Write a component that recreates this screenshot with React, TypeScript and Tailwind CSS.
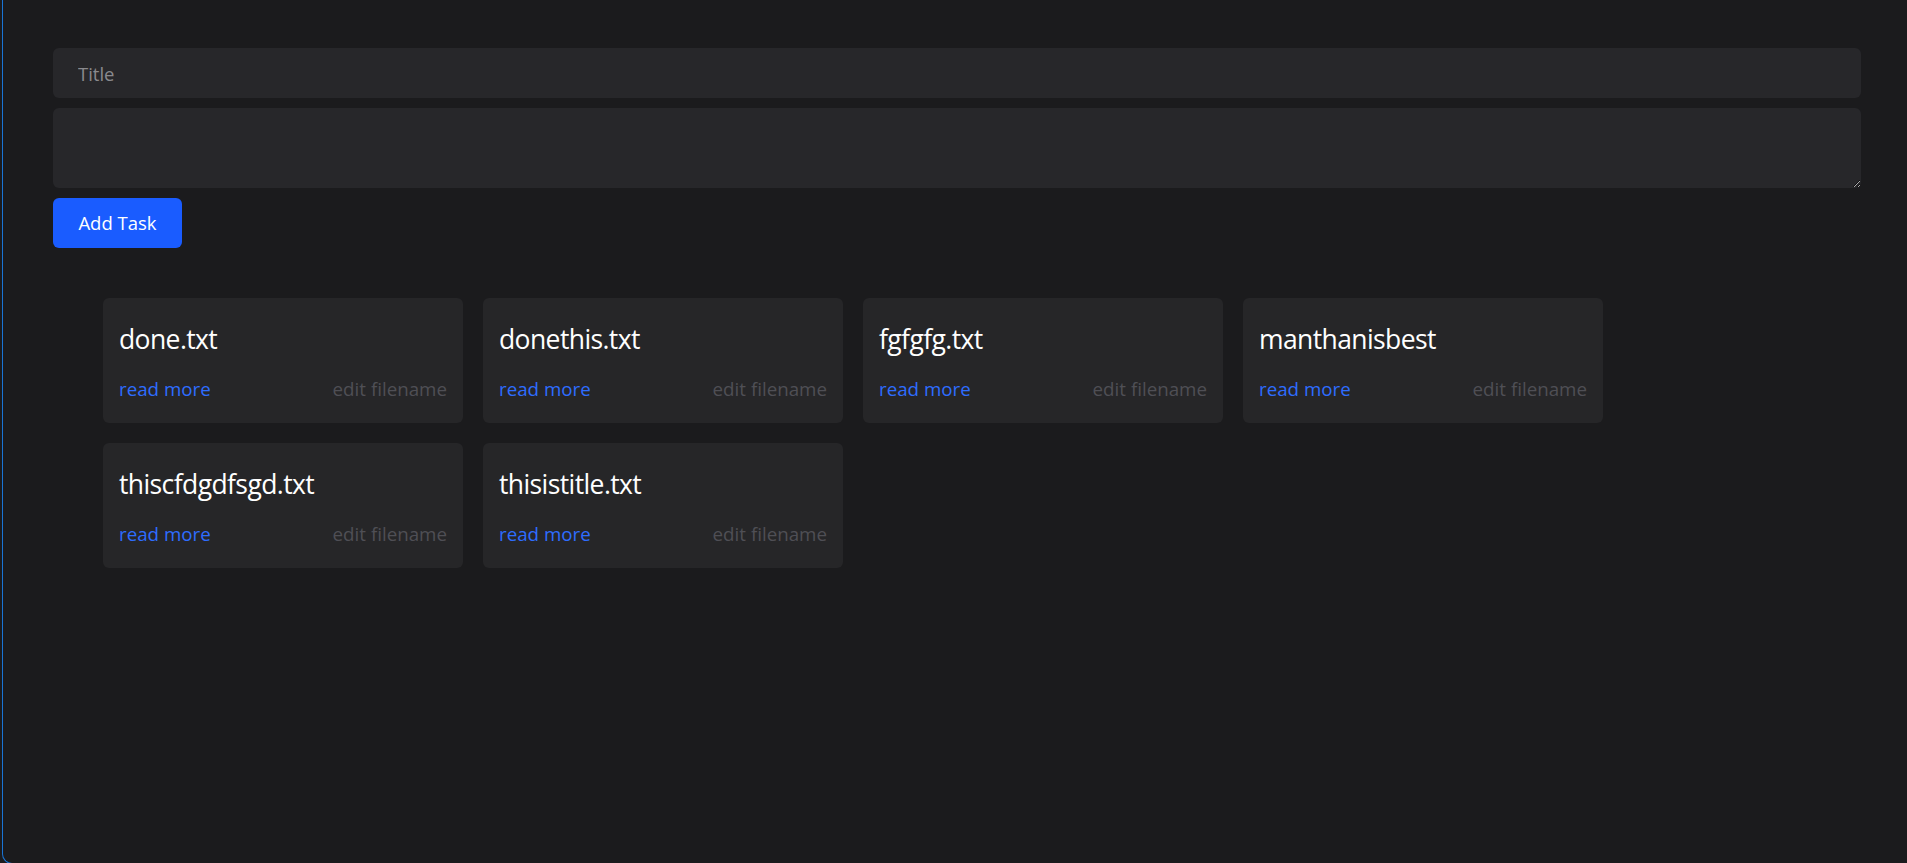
import React from "react";

const files = [
  "done.txt",
  "donethis.txt",
  "fgfgfg.txt",
  "manthanisbest",
  "thiscfdgdfsgd.txt",
  "thisistitle.txt",
];

export default function App() {
  return (
    <div
      className="w-[1907px] h-[863px] overflow-hidden bg-[#1b1b1d] pl-[2px]"
      style={{ fontFamily: '"Open Sans", "Noto Sans", sans-serif' }}
    >
      <div className="h-[864px] border-l border-b border-[#1a74d4] rounded-bl-[10px] pl-[50px] pr-[46px] pt-[48px]">
        <input
          placeholder="Title"
          className="block w-full h-[50px] rounded-[6px] bg-[#27272a] px-[25px] text-[18.5px] text-white placeholder:text-[#8a8a8e] outline-none"
        />
        <textarea className="block w-full h-[80px] mt-[10px] rounded-[6px] bg-[#27272a] px-[25px] py-[12px] text-[18px] text-white outline-none" />
        <button className="mt-[10px] h-[50px] w-[129px] rounded-[6px] bg-[#1a5cff] text-[18.5px] text-white">
          Add Task
        </button>
        <div className="mt-[50px] pl-[50px] flex flex-wrap gap-[20px]">
          {files.map((f) => (
            <div
              key={f}
              className="w-[360px] h-[125px] rounded-[6px] bg-[#262628] px-[16px] pt-[21px] flex flex-col"
            >
              <div className="text-[26.5px] leading-[40px] text-white tracking-[-0.6px]">{f}</div>
              <div className="mt-[16px] flex justify-between text-[18.75px] leading-[28px]">
                <span className="text-[#2e6dff]">read more</span>
                <span className="text-[#4f4f55]">edit filename</span>
              </div>
            </div>
          ))}
        </div>
      </div>
    </div>
  );
}
